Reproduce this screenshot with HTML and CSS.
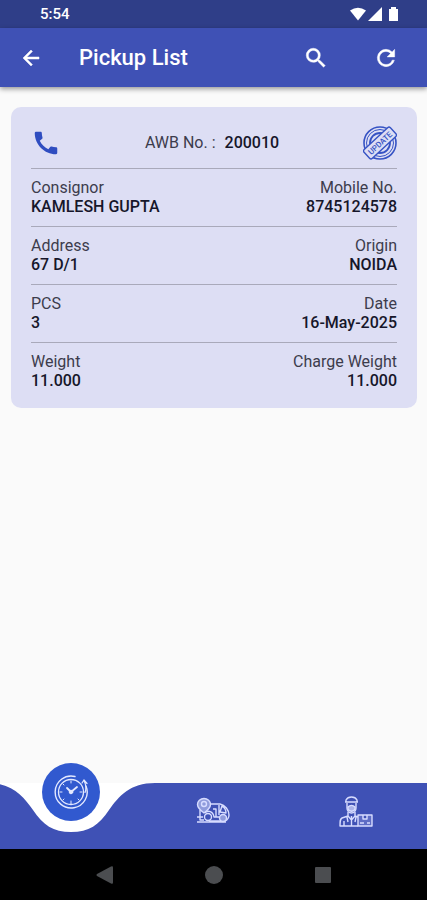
FILE: index.html
```html
<!DOCTYPE html>
<html lang="en">
<head>
    <meta charset="UTF-8">
    <meta name="viewport" content="width=device-width, initial-scale=1">
    <title>Pickup List</title>
    <link rel="stylesheet" href="styles.css">
</head>
<body>
    <div class="status-bar">
        <span>5:54</span>
        <svg width="50" height="16" viewBox="0 0 50 16" fill="#fff">
            <path d="M1 4.500Q9 -1 17 4.500L9 14.500z"/>
            <path d="M33 1v14H19z"/>
            <path d="M40 3h2V1h5v2h2v12h-9z"/>
        </svg>
    </div>

    <header class="app-bar">
        <button class="icon-button" aria-label="Back">
            <svg width="24" height="24" viewBox="0 0 24 24"><path fill="#fff" d="M20 11H7.830l5.590-5.590L12 4l-8 8 8 8 1.410-1.410L7.830 13H20v-2z" stroke="#fff" stroke-width=".5"/></svg>
        </button>
        <h1>Pickup List</h1>
        <button class="icon-button" aria-label="Search">
            <svg width="26" height="26" viewBox="0 0 24 24"><path fill="#fff" stroke="#fff" stroke-width=".4" d="M15.500 14h-.79l-.28-.27A6.470 6.470 0 0 0 16 9.500 6.500 6.500 0 1 0 9.500 16c1.610 0 3.090-.59 4.230-1.570l.27.28v.79l5 4.990L20.490 19l-4.990-5zm-6 0C7.010 14 5 11.990 5 9.500S7.010 5 9.500 5 14 7.010 14 9.500 11.990 14 9.500 14z"/></svg>
        </button>
        <button class="icon-button refresh" aria-label="Refresh">
            <svg width="26" height="26" viewBox="0 0 24 24"><path fill="#fff" stroke="#fff" stroke-width=".4" d="M17.650 6.350A7.958 7.958 0 0 0 12 4a8 8 0 1 0 7.730 10h-2.080A5.990 5.990 0 0 1 12 18c-3.310 0-6-2.690-6-6s2.690-6 6-6c1.660 0 3.140.69 4.220 1.780L13 11h7V4l-2.350 2.350z"/></svg>
        </button>
    </header>

    <main>
        <section class="card">
            <div class="card-header">
                <button class="icon-button" aria-label="Call">
                    <svg width="30" height="30" viewBox="0 0 24 24"><path fill="#2f4dc0" d="M20.010 15.380c-1.230 0-2.420-.2-3.530-.56a.977.977 0 0 0-1.010.24l-1.570 1.970c-2.830-1.350-5.480-3.900-6.890-6.830l1.950-1.660c.27-.28.350-.67.240-1.020-.37-1.110-.56-2.300-.56-3.530 0-.54-.45-.99-.99-.99H4.190C3.650 3 3 3.240 3 3.990 3 13.280 10.730 21 20.010 21c.71 0 .99-.63.99-1.180v-3.450c0-.54-.45-.99-.99-.99z"/></svg>
                </button>
                <p><span>AWB No. :</span> <b>200010</b></p>
                <button class="icon-button" aria-label="Update">
                    <svg width="34" height="34" viewBox="0 0 34 34">
                        <g fill="none" stroke="#3653c4">
                            <circle cx="17" cy="17" r="16" stroke-width="1.600"/>
                            <circle cx="17" cy="17" r="13.500"/>
                            <circle cx="17" cy="17" r="10" stroke-width="1.800"/>
                        </g>
                        <g transform="rotate(-43 17 17)">
                            <rect x="-1" y="11" width="36" height="12" rx="2" fill="#dddef4" stroke="#3653c4" stroke-width="1.400"/>
                            <text class="stamp" x="17" y="20" text-anchor="middle">UPDATE</text>
                        </g>
                    </svg>
                </button>
            </div>
            <dl class="row">
                <div><dt>Consignor</dt><dd>KAMLESH GUPTA</dd></div>
                <div><dt>Mobile No.</dt><dd>8745124578</dd></div>
            </dl>
            <dl class="row">
                <div><dt>Address</dt><dd>67 D/1</dd></div>
                <div><dt>Origin</dt><dd>NOIDA</dd></div>
            </dl>
            <dl class="row">
                <div><dt>PCS</dt><dd>3</dd></div>
                <div><dt>Date</dt><dd>16-May-2025</dd></div>
            </dl>
            <dl class="row">
                <div><dt>Weight</dt><dd>11.000</dd></div>
                <div><dt>Charge Weight</dt><dd>11.000</dd></div>
            </dl>
        </section>
    </main>

    <nav class="tabs">
        <button class="tab" aria-label="Pickups">
            <!-- Curved notch behind the active tab -->
            <svg class="notch" width="168" height="50" viewBox="0 0 168 50"><path fill="#fff" d="M0 0C25 0 36 13 46 27C56 42 66 49 84 49C102 49 112 42 122 27C132 13 143 0 168 0z"/></svg>
            <span class="active">
                <svg width="36" height="36" viewBox="0 0 36 36" fill="none" stroke="#e4e9ff" stroke-linecap="round">
                    <path d="M22 2.500A16 16 0 1 0 33 12" stroke-width="1.400"/>
                    <circle cx="18" cy="18" r="12.500" stroke-width="1.300"/>
                    <path d="M29 9l2-3 3 3.500M31 6.500c2 4 2.500 8 1 12" stroke-width="1.200"/>
                    <path d="M14 14l4 4 6-5" stroke-width="1.800"/>
                    <circle cx="18" cy="18" r="1.800" fill="#e4e9ff"/>
                    <path d="M18 7v2M18 27v3M7 18h2M27 18h2M10 10l1 1M26 26l-1-1M10 26l1-1"/>
                </svg>
            </span>
        </button>
        <button class="tab" aria-label="Deliveries">
            <svg width="34" height="28" viewBox="0 0 34 28" fill="none" stroke="#d7dcff" stroke-width="1.400" stroke-linejoin="round">
                <path d="M8 16C4 13 1.500 10 1.500 7.500a6.500 6 0 0 1 13 0C14.500 10 12 13 8 16z" fill="#8f9bdc"/>
                <circle cx="8" cy="7" r="2.500"/>
                <path d="M15 7h9c5 1 9 6 9 11 0 3-2 5-4 6M4 13v10h4M17 12h3v8M23 8v10M26 9c3 2 4 5 4 7l-6-1z"/>
                <circle cx="12" cy="20" r="3.500"/>
                <circle cx="27" cy="21" r="3.500" fill="#8f9bdc"/>
                <path d="M9 16c3-3 8-2 9 4h5M1 20h6M1 25h29M13 24h12"/>
            </svg>
        </button>
        <button class="tab" aria-label="Courier">
            <svg width="34" height="34" viewBox="0 0 34 34" fill="none" stroke="#d7dcff" stroke-width="1.400" stroke-linejoin="round">
                <path d="M7 8V6a6 5 0 0 1 11 0v2zM6 8h13M8 9v5c0 3 2 5 4.500 5s4.500-2 4.500-5V9"/>
                <path d="M9 13c2-2 5-2 7 0v2c-1 3-6 3-7 0z" fill="#aab3e8"/>
                <path d="M9 18v4l-6 2c-2 1-2 3-2 8h18M16 18v4l3 1M9 22l3.500 4 3.500-4M12.500 22v10M5 27v5M8 23l1 5M17 23l-1 5"/>
                <path d="M19 21h14v11H19zM24 21v4h4v-4M21 29h4M28 29h3" fill="#5f6dc5"/>
            </svg>
        </button>
    </nav>

    <nav class="system-nav">
        <button aria-label="System back"><svg width="18" height="18" viewBox="0 0 18 18"><path fill="#4b4d50" d="M1 8L15 .5q2-1 2 1v15q0 2-2 1L1 10q-1-1 0-2z"/></svg></button>
        <button aria-label="Home"><svg width="18" height="18" viewBox="0 0 18 18"><circle fill="#4b4d50" cx="9" cy="9" r="9"/></svg></button>
        <button aria-label="Recent apps"><svg width="18" height="18" viewBox="0 0 18 18"><rect fill="#4b4d50" x="1" y="1" width="16" height="16" rx="1"/></svg></button>
    </nav>
</body>
</html>
```

FILE: styles.css
```css
* {
    box-sizing: border-box;
}
body {
    margin: 0;
    min-height: 100vh;
    display: flex;
    flex-direction: column;
    background-color: #fafafa;
    font-family: Roboto, "Liberation Sans", sans-serif;
    font-size: 16px;
    color: #16162a;
}
button {
    padding: 0;
    border: 0;
    background: none;
    font: inherit;
    cursor: pointer;
}
svg {
    display: block;
}
.status-bar {
    height: 28px;
    padding: 0 28px 0 40px;
    display: flex;
    align-items: center;
    justify-content: space-between;
    background-color: #2f3e88;
    color: #fff;
    font-size: 15px;
    font-weight: 500;
}
.app-bar {
    height: 59px;
    padding: 0 28px 0 19px;
    display: flex;
    align-items: center;
    background-color: #3f51b5;
    box-shadow: 0 2px 5px rgba(0, 0, 0, 0.4);
}
.app-bar h1 {
    flex: 1;
    margin: 0 0 0 36px;
    color: #fff;
    font-size: 22px;
    font-weight: 500;
}
.refresh {
    margin-left: 44px;
}
main {
    flex: 1;
    padding: 20px 10px 20px 11px;
}
.card {
    padding: 0 20px 8px;
    border-radius: 10px;
    background-color: #dddef4;
}
.card-header {
    height: 61px;
    padding-top: 10px;
    display: flex;
    align-items: center;
    justify-content: space-between;
}
.card-header p {
    margin: 0;
    display: flex;
    gap: 9px;
    color: #3c3c4c;
}
.card-header b {
    color: #16162a;
    font-weight: 500;
}
.row {
    margin: 0;
    padding: 9px 0 10px;
    display: flex;
    justify-content: space-between;
    border-top: 1px solid #a9a9ba;
    line-height: 19px;
}
.row div:last-child {
    text-align: right;
}
dt {
    color: #3c3c4c;
}
dd {
    margin: 0;
    font-weight: 500;
}
.stamp {
    fill: #3653c4;
    font-size: 8px;
    font-weight: 500;
}
.tabs {
    height: 66px;
    display: flex;
    background-color: #3f51b5;
    overflow-x: clip;
}
.tab {
    position: relative;
    flex: 1;
    display: flex;
    align-items: center;
    justify-content: center;
    padding-bottom: 10px;
}
.notch {
    position: absolute;
    top: 0;
    left: 50%;
    margin-left: -84px;
}
.active {
    position: absolute;
    top: -20px;
    left: 50%;
    width: 58px;
    height: 58px;
    margin-left: -29px;
    display: flex;
    align-items: center;
    justify-content: center;
    border-radius: 50%;
    background-color: #3159cf;
}
.system-nav {
    height: 51px;
    display: flex;
    align-items: center;
    justify-content: center;
    gap: 91px;
    background-color: #000;
}
```
